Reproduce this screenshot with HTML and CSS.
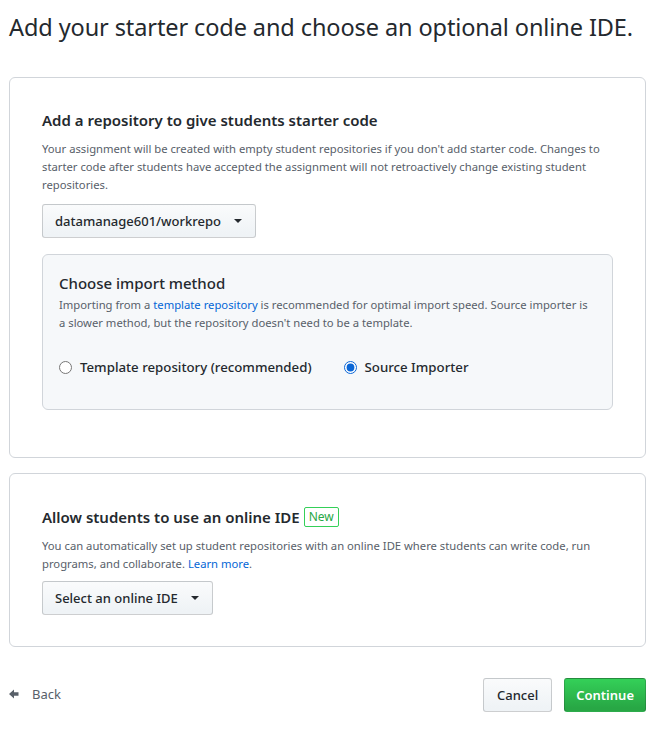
FILE: index.html
```html
<!DOCTYPE html>
<html>
<head>
<meta charset="utf-8">
<link rel="stylesheet" href="styles.css">
</head>
<body>
<div class="page">
  <h1 class="title">Add your starter code and choose an optional online IDE.</h1>

  <section class="card">
    <h2 class="card-heading">Add a repository to give students starter code</h2>
    <p class="note">Your assignment will be created with empty student repositories if you don't add starter code. Changes to starter code after students have accepted the assignment will not retroactively change existing student repositories.</p>
    <button class="btn btn-select">datamanage601/workrepo <span class="caret"></span></button>

    <div class="subcard">
      <h3 class="sub-heading">Choose import method</h3>
      <p class="note sub-note">Importing from a <a class="link" href="#">template repository</a> is recommended for optimal import speed. Source importer is a slower method, but the repository doesn't need to be a template.</p>
      <div class="radios">
        <label class="radio radio-first"><input type="radio" name="method"> Template repository (recommended)</label>
        <label class="radio"><input type="radio" name="method" checked> Source Importer</label>
      </div>
    </div>
  </section>

  <section class="card card-ide">
    <h2 class="card-heading">Allow students to use an online IDE <span class="badge">New</span></h2>
    <p class="note">You can automatically set up student repositories with an online IDE where students can write code, run programs, and collaborate. <a class="link" href="#">Learn more</a>.</p>
    <button class="btn btn-select btn-ide">Select an online IDE <span class="caret"></span></button>
  </section>

  <div class="footer">
    <a class="back" href="#"><svg class="back-icon" width="10" height="10" viewBox="0 0 10 10"><path d="M0 5 L5 0.5 V3.2 H9.5 V6.8 H5 V9.5 Z" fill="#586069"/></svg><span>Back</span></a>
    <div class="actions">
      <button class="btn btn-cancel">Cancel</button>
      <button class="btn btn-primary">Continue</button>
    </div>
  </div>
</div>
</body>
</html>
```

FILE: styles.css
```css
* { box-sizing: border-box; }
html, body { margin: 0; padding: 0; background: #fff; }
body {
  font-family: "Noto Sans", "Open Sans", sans-serif;
  color: #24292e;
}
.page {
  padding: 0 18px 0 9px;
}
.title {
  font-size: 23.5px;
  font-weight: 400;
  line-height: 30px;
  margin: 12px 0 35px 0;
  letter-spacing: -0.1px;
}
.card {
  border: 1px solid #d1d5da;
  border-radius: 6px;
  padding: 30px 32px 47px 32px;
}
.card-ide {
  margin-top: 15px;
  padding-top: 31px;
  padding-bottom: 31px;
}
.card-heading {
  font-size: 15px;
  font-weight: 600;
  line-height: 24px;
  margin: 0 0 8px 0;
  display: flex;
  align-items: center;
  gap: 4px;
}
.note {
  font-size: 11.25px;
  line-height: 18px;
  color: #586069;
  margin: 0;
}
.sub-note { margin-top: 1px; }
.link { color: #0366d6; text-decoration: none; }
.btn {
  font-family: inherit;
  font-size: 13px;
  font-weight: 500;
  color: #24292e;
  border: 1px solid rgba(27,31,35,0.2);
  border-radius: 3px;
  background: linear-gradient(#fafbfc, #eff3f6 90%);
  cursor: pointer;
}
.btn-select {
  display: flex;
  align-items: center;
  height: 34px;
  padding: 0 13px 0 12px;
  margin-top: 10px;
}
.btn-ide { margin-top: 8px; }
.caret {
  display: inline-block;
  width: 0; height: 0;
  border-left: 4px solid transparent;
  border-right: 4px solid transparent;
  border-top: 4px solid #24292e;
  margin-left: 13px;
}
.subcard {
  margin-top: 16px;
  background: #f6f8fa;
  border: 1px solid #d1d5da;
  border-radius: 6px;
  padding: 16px 16px 32px 16px;
}
.sub-heading {
  font-size: 15px;
  font-weight: 500;
  line-height: 24px;
  margin: 0;
}
.radios {
  display: flex;
  margin-top: 25px;
  height: 20px;
  align-items: center;
}
.radio {
  display: flex;
  align-items: center;
  font-size: 13.25px;
  font-weight: 500;
  color: #24292e;
}
.radio input {
  margin: 0 8px 0 0;
  width: 13px; height: 13px;
  accent-color: #0a66d6;
}
.radio-first { margin-right: 32px; }
.badge {
  display: inline-block;
  font-size: 12px;
  font-weight: 400;
  line-height: 18px;
  color: #28a745;
  border: 1px solid #34d058;
  border-radius: 2px;
  padding: 0 4px;
}
.footer {
  display: flex;
  justify-content: space-between;
  align-items: center;
  margin-top: 31px;
}
.back {
  display: flex;
  align-items: center;
  color: #586069;
  text-decoration: none;
  font-size: 13px;
  margin-top: -2px;
}
.back-icon { margin-right: 13px; }
.actions { display: flex; gap: 12px; }
.btn-cancel {
  height: 34px;
  padding: 0 13px;
}
.btn-primary {
  height: 34px;
  padding: 0 11px;
  color: #fff;
  font-weight: 600;
  background: linear-gradient(#34d058, #28a745 90%);
  border-color: rgba(27,31,35,0.2);
}
```
